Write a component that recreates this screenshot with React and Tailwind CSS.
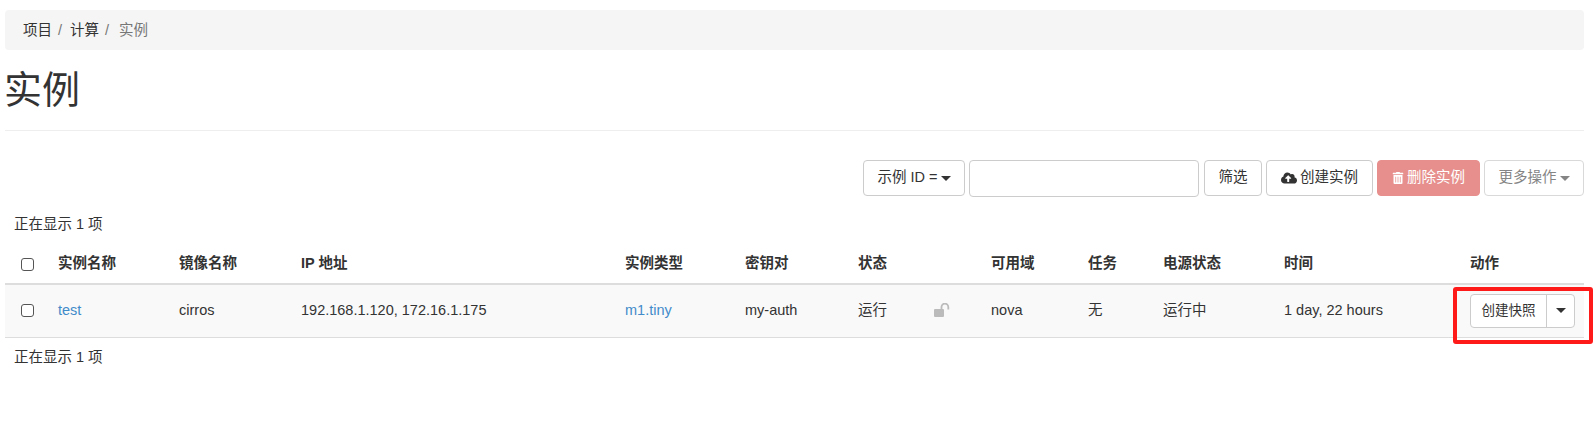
import { FaCloudUploadAlt, FaTrashAlt } from "react-icons/fa";

const fontStack = "font-['Liberation_Sans','Noto_Sans_CJK_SC',sans-serif]";

const columns = [
  { label: "实例名称", width: "w-[121px]" },
  { label: "镜像名称", width: "w-[122px]" },
  { label: "IP 地址", width: "w-[324px]" },
  { label: "实例类型", width: "w-[120px]" },
  { label: "密钥对", width: "w-[113px]" },
  { label: "状态", width: "w-[76px]" },
  { label: "", width: "w-[57px]" },
  { label: "可用域", width: "w-[97px]" },
  { label: "任务", width: "w-[75px]" },
  { label: "电源状态", width: "w-[121px]" },
  { label: "时间", width: "w-[186px]" },
  { label: "动作", width: "w-[122px]" },
];

function Caret({ className = "ml-[3px] border-t-[#333]" }) {
  return (
    <span
      className={`inline-block h-0 w-0 border-x-[5px] border-t-[5px] border-x-transparent align-middle ${className}`}
    />
  );
}

function Button({ children, className }) {
  return (
    <button
      type="button"
      className={`flex h-[36px] items-center justify-center rounded border text-[14.5px] ${className}`}
    >
      {children}
    </button>
  );
}

function Checkbox() {
  return (
    <span className="block h-[13px] w-[13px] rounded-[3px] border border-[#555] bg-white" />
  );
}

function UnlockIcon() {
  return (
    <svg width="16" height="14" viewBox="0 0 16 14" className="-mt-[2px] block">
      <rect x="0" y="6" width="10" height="8" rx="1" fill="#bbb" />
      <path d="M7.5 6.5V4a3.4 3.4 0 0 1 6.8 0v2.4" fill="none" stroke="#bbb" strokeWidth="1.8" />
    </svg>
  );
}

export default function App() {
  return (
    <div
      className={`${fontStack} relative h-[430px] overflow-hidden bg-white pl-[5px] pr-[12px] pt-[10px] text-[14.5px] text-[#333]`}
    >
      <div className="flex h-[40px] items-center rounded bg-[#f5f5f5] pl-[18px] leading-5">
        <span>项目</span>
        <span className="ml-[6px] text-[#777]">/</span>
        <span className="ml-[8px]">计算</span>
        <span className="ml-[6px] text-[#777]">/</span>
        <span className="ml-[10px] text-[#777]">实例</span>
      </div>

      <h1 className="-ml-[1px] mt-[18px] text-[38px] leading-[44px]">实例</h1>
      <div className="mt-[18px] border-t border-[#eee]" />

      <div className="mt-[29px] flex items-start justify-end">
        <Button className="w-[102px] border-[#ccc] bg-white text-[#333]">
          示例 ID =<Caret />
        </Button>
        <input
          type="text"
          className="ml-[4px] h-[37px] w-[230px] rounded border border-[#ccc] bg-white"
        />
        <Button className="ml-[5px] w-[58px] border-[#ccc] bg-white text-[#333]">筛选</Button>
        <Button className="ml-[4px] w-[107px] border-[#ccc] bg-white text-[#333]">
          <FaCloudUploadAlt className="mr-[3px] text-[16px]" />
          创建实例
        </Button>
        <Button className="ml-[4px] w-[103px] border-[#e68f8d] bg-[#e68f8d] text-white">
          <FaTrashAlt className="mr-[3px] text-[12px]" />
          删除实例
        </Button>
        <Button className="ml-[4px] w-[100px] border-[#d9d9d9] bg-white text-[#858585]">
          更多操作
          <Caret className="ml-[3px] border-t-[#858585]" />
        </Button>
      </div>

      <p className="mt-[17px] pl-[9px] leading-5">正在显示 1 项</p>

      <table className="mt-[11px] w-[1579px] table-fixed border-collapse">
        <thead>
          <tr className="h-[39px] border-b-2 border-[#ddd] text-left">
            <th className="w-[45px] pl-[16px] align-middle">
              <Checkbox />
            </th>
            {columns.map((col) => (
              <th
                key={col.label || "lock"}
                className={`${col.width} px-2 align-middle font-bold`}
              >
                {col.label}
              </th>
            ))}
          </tr>
        </thead>
        <tbody>
          <tr className="h-[53px] border-b border-[#ddd] bg-[#f9f9f9]">
            <td className="pl-[16px]">
              <Checkbox />
            </td>
            <td className="px-2 text-[#428bca]">test</td>
            <td className="px-2">cirros</td>
            <td className="px-2">192.168.1.120, 172.16.1.175</td>
            <td className="px-2 text-[#428bca]">m1.tiny</td>
            <td className="px-2">my-auth</td>
            <td className="px-2">运行</td>
            <td className="px-2">
              <UnlockIcon />
            </td>
            <td className="px-2">nova</td>
            <td className="px-2">无</td>
            <td className="px-2">运行中</td>
            <td className="px-2">1 day, 22 hours</td>
            <td className="px-2">
              <div className="flex h-[34px] w-[105px] rounded border border-[#ccc] bg-white text-[13.5px]">
                <span className="flex w-[76px] items-center justify-center border-r border-[#ccc]">
                  创建快照
                </span>
                <span className="flex flex-1 items-center justify-center">
                  <Caret className="border-t-[#333]" />
                </span>
              </div>
            </td>
          </tr>
        </tbody>
      </table>

      <p className="mt-[9px] pl-[9px] leading-5">正在显示 1 项</p>

      <div className="absolute left-[1453px] top-[287px] h-[57px] w-[140px] rounded-[3px] border-[4px] border-[#ff1a1a]" />
    </div>
  );
}
